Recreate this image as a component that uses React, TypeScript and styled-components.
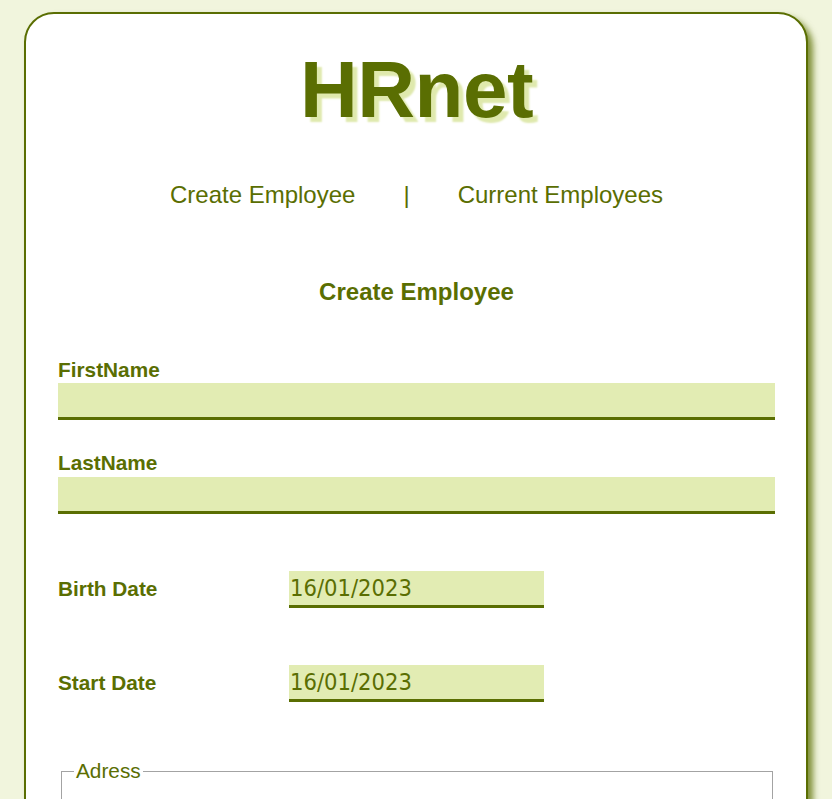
import React from "react";
import styled, { createGlobalStyle } from "styled-components";

const olive = "#5a6e02";
const pale = "#e2ecb3";

const GlobalStyle = createGlobalStyle`
  html, body {
    margin: 0;
    padding: 0;
  }
  body {
    margin: 8px;
    background: #f1f5dd;
    font-family: "Liberation Sans", Arial, sans-serif;
    color: ${olive};
  }
`;

const Card = styled.main`
  margin: 4px 16px 0 16px;
  background: #ffffff;
  border: 2px solid ${olive};
  border-radius: 30px;
  box-shadow: 5px 5px 6px rgba(90, 110, 2, 0.75);
  padding: 36px 31px 40px 32px;
`;

const Title = styled.h1`
  margin: 0;
  font-size: 80px;
  line-height: 80px;
  font-weight: 700;
  text-align: center;
  color: ${olive};
  text-shadow: 5px 5px 2px #dfe9ad;
  letter-spacing: -0.5px;
`;

const Nav = styled.nav`
  margin-top: 52.5px;
  display: flex;
  justify-content: center;
  align-items: center;
  gap: 48px;
  font-size: 24px;
  line-height: 24px;
`;

const NavLink = styled.a`
  color: ${olive};
  text-decoration: none;
  cursor: pointer;
`;

const Separator = styled.span`
  color: ${olive};
`;

const Heading = styled.h2`
  margin: 73px 0 0 0;
  font-size: 24px;
  line-height: 24px;
  font-weight: 700;
  text-align: center;
`;

const Form = styled.form`
  display: flex;
  flex-direction: column;
  margin-top: 56px;
`;

const Field = styled.div<{ $top?: number }>`
  display: flex;
  flex-direction: column;
  margin-top: ${(p) => p.$top ?? 0}px;
`;

const Label = styled.label`
  font-size: 20.8px;
  line-height: 20.8px;
  font-weight: 700;
  color: ${olive};
`;

const TextInput = styled.input`
  box-sizing: border-box;
  margin-top: 2.7px;
  width: 100%;
  height: 37px;
  border: none;
  border-bottom: 3px solid ${olive};
  background: ${pale};
  outline: none;
  padding: 0 4px;
  font-family: "Liberation Sans", Arial, sans-serif;
  font-size: 20px;
  color: ${olive};
`;

const DateRow = styled.div<{ $top: number }>`
  display: grid;
  grid-template-columns: 231px 255px;
  align-items: center;
  margin-top: ${(p) => p.$top}px;
`;

const DateInput = styled.input`
  box-sizing: border-box;
  width: 255px;
  height: 37px;
  border: none;
  border-bottom: 3px solid ${olive};
  background: ${pale};
  outline: none;
  padding: 0 0 0 1px;
  font-family: "DejaVu Sans Condensed", "DejaVu Sans", Tahoma, sans-serif;
  font-size: 23.5px;
  color: ${olive};
`;

const Fieldset = styled.fieldset`
  margin: 59.4px 2px 0 3px;
  border: 1px solid #a3a3a3;
  padding: 8px 12px 12px 12px;
`;

const Legend = styled.legend`
  padding: 0 2px;
  font-size: 20.8px;
  line-height: 20.8px;
  color: ${olive};
`;

export default function App() {
  return (
    <>
      <GlobalStyle />
      <Card>
        <Title>HRnet</Title>
        <Nav>
          <NavLink>Create Employee</NavLink>
          <Separator>|</Separator>
          <NavLink>Current Employees</NavLink>
        </Nav>
        <Heading>Create Employee</Heading>
        <Form onSubmit={(e) => e.preventDefault()}>
          <Field>
            <Label htmlFor="first-name">FirstName</Label>
            <TextInput id="first-name" type="text" />
          </Field>
          <Field $top={33.4}>
            <Label htmlFor="last-name">LastName</Label>
            <TextInput id="last-name" type="text" />
          </Field>
          <DateRow $top={57}>
            <Label htmlFor="birth-date">Birth Date</Label>
            <DateInput id="birth-date" type="text" defaultValue="16/01/2023" />
          </DateRow>
          <DateRow $top={57}>
            <Label htmlFor="start-date">Start Date</Label>
            <DateInput id="start-date" type="text" defaultValue="16/01/2023" />
          </DateRow>
          <Fieldset>
            <Legend>Adress</Legend>
            <Field $top={40}>
              <Label htmlFor="street">Street</Label>
              <TextInput id="street" type="text" />
            </Field>
            <Field $top={33.4}>
              <Label htmlFor="city">City</Label>
              <TextInput id="city" type="text" />
            </Field>
          </Fieldset>
        </Form>
      </Card>
    </>
  );
}
